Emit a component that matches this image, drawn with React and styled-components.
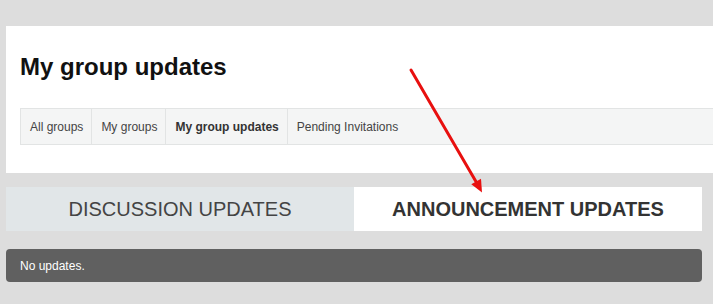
import React from "react";
import styled, { createGlobalStyle } from "styled-components";

const Global = createGlobalStyle`
  html, body { margin: 0; padding: 0; background: #dddddd; overflow: hidden; }
  body { font-family: Arial, "Liberation Sans", sans-serif; }
`;

const Page = styled.div`
  position: relative;
  padding: 26px 0 0 6px;
  width: 713px;
  height: 304px;
  box-sizing: border-box;
`;

const Card = styled.section`
  background: #ffffff;
  padding: 27px 0 28px 14px;
`;

const Title = styled.h1`
  margin: 0 0 27px 0;
  font-size: 24px;
  line-height: 28px;
  font-weight: bold;
  color: #111111;
`;

const Nav = styled.nav`
  display: flex;
  height: 37px;
  box-sizing: border-box;
  background: #f4f5f5;
  border: 1px solid #e2e4e4;
  border-right: none;
`;

const NavItem = styled.a`
  display: flex;
  align-items: center;
  padding: 0 8px 0 9px;
  font-size: 12px;
  color: ${(p) => (p.$active ? "#333333" : "#444444")};
  font-weight: ${(p) => (p.$active ? "bold" : "normal")};
  border-right: 1px solid #e2e4e4;
  text-decoration: none;
  white-space: nowrap;

  &:last-child {
    border-right: none;
  }
`;

const Tabs = styled.div`
  display: grid;
  grid-template-columns: 1fr 1fr;
  margin: 14px 11px 0 0;
  height: 44px;
`;

const Tab = styled.div`
  display: flex;
  align-items: center;
  justify-content: center;
  font-size: 20px;
  text-transform: uppercase;
  background: ${(p) => (p.$active ? "#ffffff" : "#e1e6e8")};
  color: ${(p) => (p.$active ? "#333333" : "#444444")};
  font-weight: ${(p) => (p.$active ? "bold" : "normal")};
`;

const Notice = styled.div`
  margin: 18px 11px 0 0;
  height: 33px;
  display: flex;
  align-items: center;
  padding-left: 14px;
  border-radius: 4px;
  background: #606060;
  color: #ffffff;
  font-size: 12px;
`;

const Overlay = styled.svg`
  position: absolute;
  left: 0;
  top: 0;
  pointer-events: none;
`;

export default function App() {
  const navItems = [
    { label: "All groups" },
    { label: "My groups" },
    { label: "My group updates", active: true },
    { label: "Pending Invitations" },
  ];
  return (
    <Page>
      <Global />
      <Card>
        <Title>My group updates</Title>
        <Nav>
          {navItems.map((n) => (
            <NavItem key={n.label} $active={n.active}>
              {n.label}
            </NavItem>
          ))}
        </Nav>
      </Card>
      <Tabs>
        <Tab>Discussion updates</Tab>
        <Tab $active>Announcement updates</Tab>
      </Tabs>
      <Notice>No updates.</Notice>
      <Overlay width="713" height="304" viewBox="0 0 713 304">
        <line x1="411" y1="70" x2="476.5" y2="182.5" stroke="#e8100f" strokeWidth="3" strokeLinecap="round" />
        <polygon points="482,192.5 471.3,184.3 481,178.8" fill="#e8100f" />
      </Overlay>
    </Page>
  );
}
